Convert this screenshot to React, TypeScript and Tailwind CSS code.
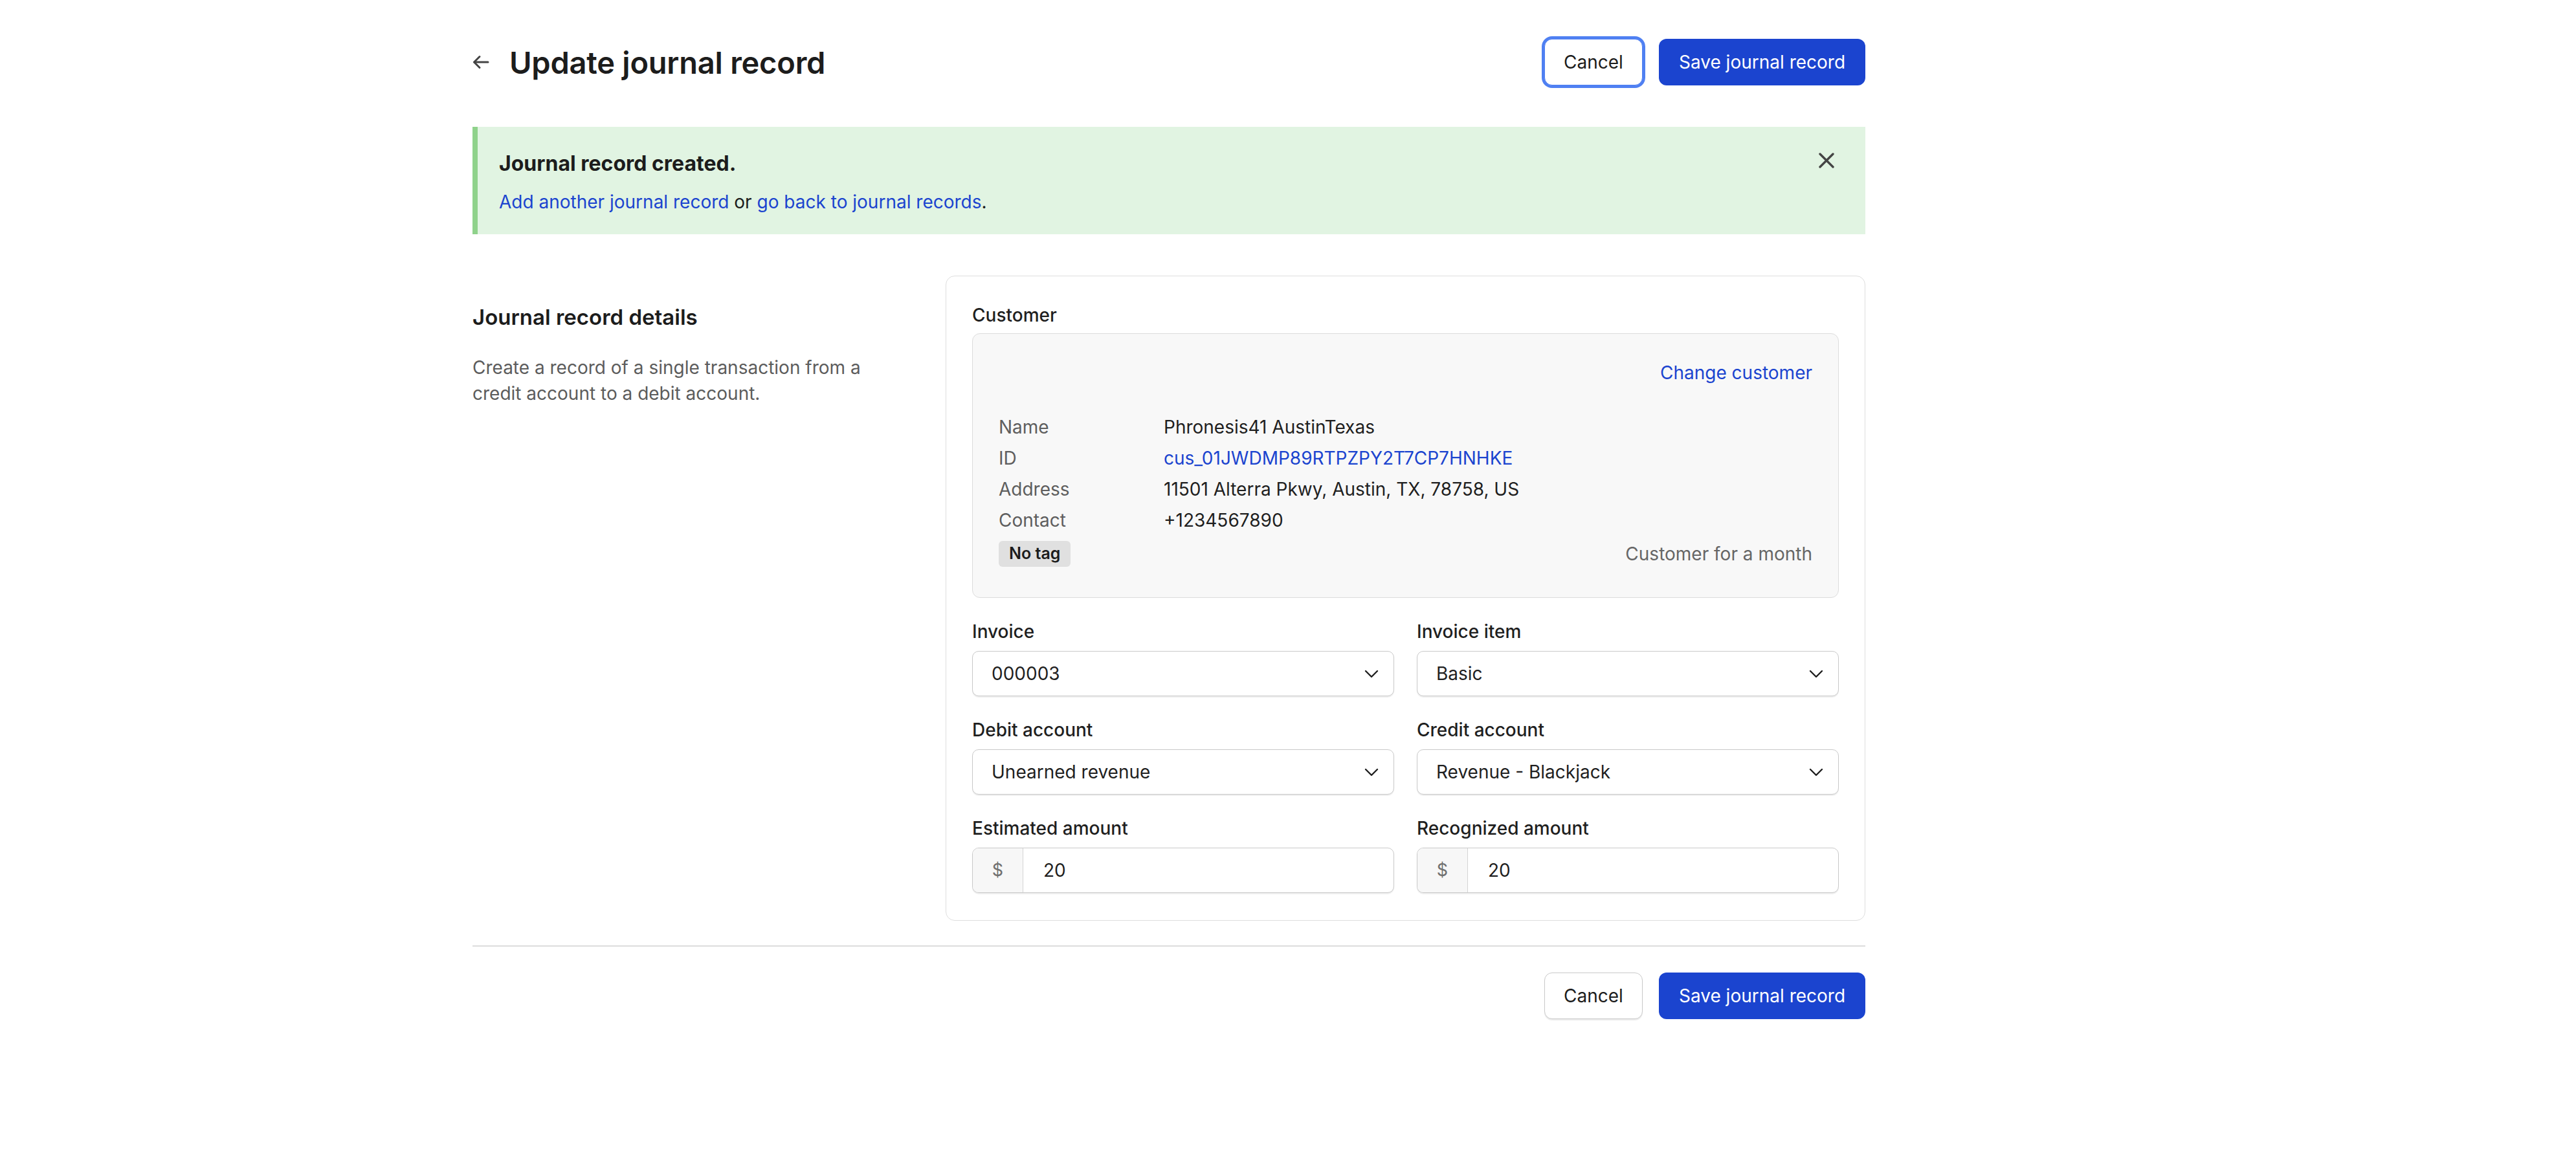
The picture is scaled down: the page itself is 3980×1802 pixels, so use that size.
import React from "react";

const BLUE = "text-[#1b44cf]";

function ArrowLeft() {
  return (
    <svg width="26" height="24" viewBox="0 0 26 24" fill="none" stroke="#444" strokeWidth="3" strokeLinecap="round" strokeLinejoin="round" aria-hidden>
      <path d="M24 12H3" />
      <path d="M11 3.5L2.5 12l8.5 8.5" />
    </svg>
  );
}

function Chevron() {
  return (
    <svg width="22" height="13" viewBox="0 0 22 13" fill="none" stroke="#1f1f1f" strokeWidth="2.4" strokeLinecap="round" strokeLinejoin="round" aria-hidden>
      <path d="M2 2l9 9 9-9" />
    </svg>
  );
}

function CloseIcon() {
  return (
    <svg width="24" height="24" viewBox="0 0 24 24" fill="none" stroke="#444" strokeWidth="3.4" strokeLinecap="round" aria-hidden>
      <path d="M2 2l20 20M22 2L2 22" />
    </svg>
  );
}

function Buttons({ focused }: { focused?: boolean }) {
  return (
    <div className="flex items-center gap-[25px]">
      <button
        type="button"
        className={
          focused
            ? "h-[72px] w-[152px] rounded-[12px] border border-[#4f80f2] bg-white text-[28px] text-[#1c1c1c] ring-4 ring-[#4f80f2]"
            : "h-[72px] w-[152px] rounded-[12px] border border-[#c9c9c9] bg-white text-[28px] text-[#1c1c1c] shadow-[0_2px_1px_rgba(0,0,0,0.08)]"
        }
      >
        Cancel
      </button>
      <button type="button" className="h-[72px] w-[319px] rounded-[12px] bg-[#1b44cf] text-[28px] text-white">
        Save journal record
      </button>
    </div>
  );
}

function Field({ label, children }: { label: string; children: React.ReactNode }) {
  return (
    <div>
      <div className="text-[28px] font-medium leading-[40px] text-[#1f1f1f]">{label}</div>
      <div className="mt-[10px]">{children}</div>
    </div>
  );
}

function Select({ value }: { value: string }) {
  return (
    <div className="flex h-[70px] items-center justify-between rounded-[10px] border border-[#c9c9c9] bg-white pl-[29px] pr-[23px] shadow-[0_2px_1px_rgba(0,0,0,0.07)]">
      <span className="text-[28px] text-[#1f1f1f]">{value}</span>
      <Chevron />
    </div>
  );
}

function Amount({ value }: { value: string }) {
  return (
    <div className="flex h-[70px] overflow-hidden rounded-[10px] border border-[#c9c9c9] bg-white shadow-[0_2px_1px_rgba(0,0,0,0.07)]">
      <div className="flex w-[78px] items-center justify-center border-r border-[#d4d4d4] bg-[#f7f7f7] text-[27px] text-[#707070]">$</div>
      <div className="flex flex-1 items-center pl-[31px] text-[28px] text-[#1f1f1f]">{value}</div>
    </div>
  );
}

const rows: { label: string; value: string; link?: boolean }[] = [
  { label: "Name", value: "Phronesis41 AustinTexas" },
  { label: "ID", value: "cus_01JWDMP89RTPZPY2T7CP7HNHKE", link: true },
  { label: "Address", value: "11501 Alterra Pkwy, Austin, TX, 78758, US" },
  { label: "Contact", value: "+1234567890" },
];

export default function App() {
  return (
    <div className="min-h-screen bg-white font-['Inter','Noto_Sans',sans-serif] text-[#1c1c1c]">
      <div className="ml-[730px] w-[2152px] pt-[60px] pb-[100px]">
        {/* Header */}
        <div className="flex h-[72px] items-center justify-between">
          <div className="flex items-center">
            <ArrowLeft />
            <h1 className="ml-[31px] text-[47px] font-semibold leading-none tracking-[-0.005em]">Update journal record</h1>
          </div>
          <Buttons focused />
        </div>

        {/* Success banner */}
        <div className="relative mt-[64px] border-l-8 border-[#8fd28b] bg-[#e1f4e2] pb-[30px] pl-[33px] pt-[37px]">
          <div className="text-[32px] font-bold leading-[40px]">Journal record created.</div>
          <p className="mt-[19px] text-[28px] leading-[40px]">
            <a className={BLUE}>Add another journal record</a> or <a className={BLUE}>go back to journal records</a>.
          </p>
          <button type="button" className="absolute right-[48px] top-[40px]" aria-label="Close">
            <CloseIcon />
          </button>
        </div>

        {/* Form */}
        <div className="mt-[64px] grid grid-cols-[1fr_1421px]">
          <div className="pt-[44px]">
            <h2 className="text-[33px] font-semibold leading-[40px]">Journal record details</h2>
            <p className="mt-[38px] w-[620px] text-[28px] leading-[40px] text-[#5c5c5c]">
              Create a record of a single transaction from a credit account to a debit account.
            </p>
          </div>

          <div className="rounded-[14px] border border-[#dedede] px-[40px] pb-[42px] pt-[40px]">
            <div className="text-[28px] font-medium leading-[40px] text-[#1f1f1f]">Customer</div>
            <div className="mt-[8px] rounded-[12px] border border-[#dcdcdc] bg-[#f8f8f8] px-[40px] pb-[47px] pt-[40px]">
              <div className="text-right text-[28px] leading-[40px]">
                <a className={BLUE}>Change customer</a>
              </div>
              <div className="mt-[40px] grid grid-cols-[255px_1fr] text-[28px] leading-[48px]">
                {rows.map((r) => (
                  <React.Fragment key={r.label}>
                    <div className="text-[#5e5e5e]">{r.label}</div>
                    <div className={r.link ? BLUE : "text-[#1f1f1f]"}>{r.value}</div>
                  </React.Fragment>
                ))}
              </div>
              <div className="mt-[8px] flex h-[40px] items-center justify-between">
                <span className="flex h-[40px] items-center rounded-[6px] bg-[#e0e0e0] px-[16px] text-[25px] font-semibold text-[#1c1c1c]">No tag</span>
                <span className="text-[28px] leading-[40px] text-[#666]">Customer for a month</span>
              </div>
            </div>

            <div className="mt-[32px] grid grid-cols-2 gap-x-[35px] gap-y-[32px]">
              <Field label="Invoice">
                <Select value="000003" />
              </Field>
              <Field label="Invoice item">
                <Select value="Basic" />
              </Field>
              <Field label="Debit account">
                <Select value="Unearned revenue" />
              </Field>
              <Field label="Credit account">
                <Select value="Revenue - Blackjack" />
              </Field>
              <Field label="Estimated amount">
                <Amount value="20" />
              </Field>
              <Field label="Recognized amount">
                <Amount value="20" />
              </Field>
            </div>
          </div>
        </div>

        <div className="mt-[38px] border-t-2 border-[#dcdcdc]" />

        <div className="mt-[40px] flex justify-end">
          <Buttons />
        </div>
      </div>
    </div>
  );
}
